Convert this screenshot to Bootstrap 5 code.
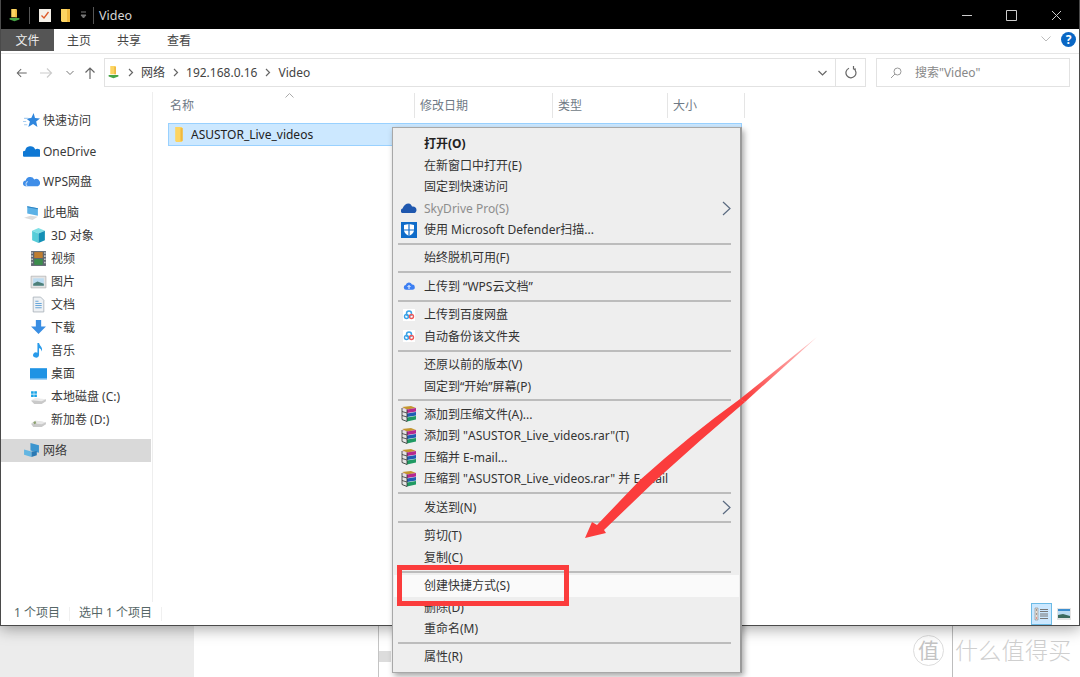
<!DOCTYPE html>
<html lang="zh-CN">
<head>
    <meta charset="UTF-8">
    <meta name="viewport" content="width=device-width, initial-scale=1.0">
    <title>Video</title>
    <link href="https://cdn.jsdelivr.net/npm/bootstrap@5.3.0/dist/css/bootstrap.min.css" rel="stylesheet">
    <style>
        html, body { margin: 0; height: 677px; overflow: hidden; background: #fff; }
        body { font: 12px/1.2 "Noto Sans", "Noto Sans CJK SC", sans-serif; color: #333; }
        .stage { width: 1080px; height: 677px; overflow: hidden; }
        .win { height: 626px; border: 1px solid #4a4a4a; border-top: 0; background: #fff; box-shadow: 0 3px 14px rgba(0,0,0,.35); z-index: 2; }

        .title-bar { height: 29px; background: #000; color: #d5d5d5; padding-left: 7px; padding-top: 1px; font-size: 12.5px; }
        .title-sep { width: 1px; height: 17px; background: #555; }
        .title-name { margin-left: 5px; }
        .win-btn { width: 45px; }
        .tab-bar { height: 25px; border-bottom: 1px solid #e6e6e6; }
        .tab-item { width: 50px; height: 22px; line-height: 24px; text-align: center; color: #444; margin-bottom: 3px; }
        .tab-file { width: 53px; background: #555; color: #eee; }
        .help-dot { width: 15px; height: 15px; background: #0a67c4; color: #fff; font-weight: 700; line-height: 15px; font-size: 12px; text-align: center; margin: 0 3px 3px 10px; }

        .addr-row { height: 38px; padding-top: 4px; align-items: flex-start; }
        .nav-btns { width: 103px; height: 29px; }
        .addr-box { width: 762px; height: 29px; border: 1px solid #e2e2e2; color: #444; line-height: 29px; }
        .addr-path { gap: 7.5px; padding-left: 2px; }
        .addr-icon { width: 13px; height: 17px; flex: none; }
        .addr-end { width: 30px; height: 27px; border-left: 1px solid #e2e2e2; }
        .search-box { width: 194px; height: 29px; margin-left: 10px; border: 1px solid #e2e2e2; color: #888; padding-left: 13px; gap: 13px; line-height: 29px; }

        .side-pane { width: 152px; border-right: 1px solid #eee; padding-top: 17px; color: #3a3a3a; }
        .side-row { height: 23px; display: flex; align-items: center; padding-left: 22px; gap: 3px; line-height: 25px; }
        .side-row.sub { padding-left: 29px; gap: 4px; }
        .side-row.active { background: #d9d9d9; margin-right: 1px; }
        .side-gap { margin-top: 8px; }
        .side-gap2 { margin-top: 7px; }
        .ic16 { width: 17px; height: 17px; flex: none; }

        .col-head { height: 26px; color: #6f7a86; }
        .col-cell { height: 25px; border-right: 1px solid #e5e5e5; padding-left: 5px; line-height: 25px; margin-top: 1px; }
        .sort-mark { top: 1px; left: 132px; }
        .file-row { height: 23px; width: 574px; margin: 5px 0 0 15px; background: #cce8ff; border: 1px solid #99d1ff; gap: 2px; padding-left: 3px; color: #222; line-height: 24px; }

        .status-bar { height: 23px; color: #566; padding-left: 13px; }
        .stat-sep { width: 1px; height: 14px; background: #f0f0f0; margin: 0 9px; }
        .view-on { width: 21px; height: 22px; background: #cce8ff; border: 1px solid #6cbbe6; }
        .view-off { width: 18px; height: 22px; margin: 0 6px 0 3px; }

        .under-strip { height: 51px; }
        .under-left { width: 194px; background: #ececec; }
        .under-mid { width: 185px; border-right: 1px solid #c4c4c4; }
        .under-bar { width: 12px; height: 11px; margin-top: 25px; background: #dcdcdc; }
        .mark-wrap { width: 167px; margin-left: auto; margin-right: 0; padding-top: 9px; color: #d0d0d0; }
        .mark-disc { width: 31px; height: 31px; border: 1px solid #ddd; font-size: 21px; line-height: 28px; text-align: center; color: #c4c4c4; }
        .mark-line { width: 1px; height: 60px; margin: -9px 2px 0 8px; background: #bdbdbd; }
        .mark-word { font-size: 23px; line-height: 30px; font-weight: 300; white-space: nowrap; letter-spacing: .3px; color: #cfcfcf; }

        .ctx-menu { left: 392px; top: 127px; width: 350px; height: 546px; margin: 0; padding: 5px 0 0; display: block; position: absolute;
            background: #eee; border: 1px solid #a8a8a8; border-right: 2px solid #9a9a9a; border-radius: 0; box-shadow: 2px 3px 6px rgba(0,0,0,.35); font-size: 12px; z-index: 5; }
        .ctx-menu .dropdown-item { height: 21.5px; line-height: 21.5px; padding: 0 0 0 31px; color: #333; position: relative; font-size: 12px; white-space: nowrap; }
        .ctx-menu .dropdown-divider { margin: 2.45px 9px 2.45px 5px; height: 2px; border: 0; background: #bcbcbc; opacity: 1; }
        .ctx-menu .is-muted { color: #8d8d8d; }
        .ctx-menu .is-bold { font-weight: 700; color: #222; }
        .ctx-menu .is-hot { background: #fafafa; width: 345px; margin-left: 1px; padding-left: 30px; }
        .menu-ic { position: absolute; left: 8px; top: 2.5px; width: 16px; height: 16px; }
        .menu-ic.tiny { left: 10px; top: 4.5px; width: 12px; height: 12px; }
        .menu-arrow { position: absolute; right: 9px; top: 3px; width: 9px; height: 15px; }
        .red-box { left: 397px; top: 565px; width: 172px; height: 41px; border: 5px solid #fb3c3c; z-index: 6; }
        .red-arrow { left: 0; top: 0; z-index: 7; pointer-events: none; }
    </style>
</head>
<body>

<svg width="0" height="0" class="position-absolute">
    <defs>
        <linearGradient id="tailFade" gradientUnits="userSpaceOnUse" x1="817" y1="337" x2="745" y2="400">
            <stop offset="0" stop-color="#fb3c3c" stop-opacity=".25"/>
            <stop offset="1" stop-color="#fb3c3c"/>
        </linearGradient>
        <symbol id="folder" viewBox="0 0 16 16"><path d="M3 1h6l1 1v12l-1 1H4L3 14z" fill="#fcd462"/><path d="M8 2h2v12H8z" fill="#f0b93f"/></symbol>
        <symbol id="netFolder" viewBox="0 0 16 16"><path d="M4 0h6l1 1v9H4z" fill="#fcd462"/><path d="M9 1h2v9H9z" fill="#eeb83e"/><path d="M2 11h12v2l-6 2-6-2z" fill="#46a546"/></symbol>
        <symbol id="star" viewBox="0 0 16 16"><path d="M10 1l1.300 4.600L16 6l-3.600 3 1.200 5L9.500 11.300 5 14l1.500-5L3 6l4.800-.4z" fill="#2f86dd"/><path d="M1 6h4M0 9h3M1 12h3" stroke="#a8cdf0"/></symbol>
        <symbol id="oneDrive" viewBox="0 0 16 16"><path d="M1 13a3 3 0 0 1 1-5.800A5 5 0 0 1 11.500 6 3.600 3.600 0 0 1 15.500 13z" fill="#0f78d4"/></symbol>
        <symbol id="wpsCloud" viewBox="0 0 16 16"><path d="M2 12.500a2.800 2.800 0 0 1 .6-5.500A4.300 4.300 0 0 1 10.600 6a3.300 3.300 0 0 1 3.400 6.500z" fill="#3f8ee8"/><path d="M4 12.500a2.500 2.500 0 0 1 .5-4.500" stroke="#bcd8f8" fill="none"/></symbol>
        <symbol id="myPc" viewBox="0 0 16 16"><path d="M4 2l10 2v7L4 9z" fill="#5bb1e6"/><path d="M4 2l10 2v1L4 3z" fill="#2d83c3"/><path d="M1 13l6-2 7 1-5 3z" fill="#dcdcdc"/></symbol>
        <symbol id="cube" viewBox="0 0 16 16"><path d="M8 1l6 2.500L8 6 2 3.500z" fill="#7fe0e6"/><path d="M2 3.500L8 6v9l-6-2.500z" fill="#57cdd8"/><path d="M14 3.500V12.500L8 15V6z" fill="#1390b6"/></symbol>
        <symbol id="film" viewBox="0 0 16 16"><path d="M1 1h14v14H1z" fill="#5e6670"/><path d="M4 2h8v5.500H4z" fill="#c07e30"/><path d="M4 8.500h8V14H4z" fill="#3c8d4d"/><path d="M2 2v12M14 2v12" stroke="#ddd" stroke-width="1.300" stroke-dasharray="1.500 1.500"/></symbol>
        <symbol id="photo" viewBox="0 0 16 16"><path d="M1 3h14v11H1z" fill="#e4e4e4" stroke="#aaa" stroke-width=".6"/><path d="M3 5h10v7H3z" fill="#bcdcf2"/><path d="M3 10l4-2 6 2v2H3z" fill="#4d7f78"/></symbol>
        <symbol id="docPage" viewBox="0 0 16 16"><path d="M3 1h7l3 3v11H3z" fill="#eef1f4" stroke="#aab2ba" stroke-width=".8"/><path d="M5 5h3M5 7h6M5 9h6M5 11h6" stroke="#6aa7d9"/></symbol>
        <symbol id="dlArrow" viewBox="0 0 16 16"><path d="M5.500 1h5v6H15L8 14 1 7h4.500z" fill="#3a8ee3"/></symbol>
        <symbol id="note" viewBox="0 0 16 16"><path d="M7 1h1.500c.5 3 4 4 2.500 8-.3-2-1.500-3-2.500-3.300V12.500A2.800 2.500 0 1 1 7 10z" fill="#2a9bea"/></symbol>
        <symbol id="desk" viewBox="0 0 16 16"><path d="M0 3h16v10.500H0z" fill="#1f93e4"/><path d="M0 12.500h16v1H0z" fill="#8cc8f2"/></symbol>
        <symbol id="driveC" viewBox="0 0 16 16"><path d="M1 3h2.500v2.500H1zM4 3h2.500v2.500H4zM1 6h2.500v2.500H1zM4 6h2.500v2.500H4z" fill="#19a3e6"/><path d="M1 12l4-2 10 .5v2L11 15H4z" fill="#c9c9c9"/><path d="M1 11.500L5 9.500l10 1-4 2z" fill="#ececec"/></symbol>
        <symbol id="driveD" viewBox="0 0 16 16"><path d="M1 12l4-2.500 10 1v2L11 15H3z" fill="#c9c9c9"/><path d="M1 11.500L5 9l10 1.500-4 2z" fill="#e7e7e7"/><path d="M3 10.500l2-1 1 2-2 1z" fill="#8ba06e"/></symbol>
        <symbol id="netMon" viewBox="0 0 16 16"><path d="M7 1l8 2v7l-8-2z" fill="#3b95cf"/><path d="M1 7l7 2v5l-7-2z" fill="#63b6e2"/><path d="M8 9l5-.5v4L8 14z" fill="#2a79b4"/></symbol>
        <symbol id="skyCloud" viewBox="0 0 16 16"><path d="M1 13a2.500 2.500 0 0 1 .5-4.500C3 5 5 3.500 7.500 3.500c2 0 3 1.500 3.500 3 2.500-.5 4.500 1 4.500 3.500 0 1.500-1 3-2 3z" fill="#1f57ae"/></symbol>
        <symbol id="shield" viewBox="0 0 16 16"><path d="M0 0h16v16H0z" fill="#0f6cc9"/><path d="M3 3l5-1 5 1v5c0 3-3 5-5 6-2-1-5-3-5-6z" fill="#fff"/><path d="M8 2v12M3 8h10" stroke="#0f6cc9" stroke-width="1.200"/></symbol>
        <symbol id="upCloud" viewBox="0 0 16 16"><path d="M4 13a3.300 3.300 0 0 1-.4-6.500A4.500 4.500 0 0 1 12 6a3.500 3.500 0 0 1 .5 7z" fill="#3d7ff2"/><path d="M8 12V7.500M6 9.300L8 7.300l2 2" stroke="#fff" stroke-width="1.300" fill="none"/></symbol>
        <symbol id="baidu" viewBox="0 0 16 16"><path d="M2 2h12v12H2z" fill="#fff"/><circle cx="8" cy="6.500" r="2.500" fill="none" stroke="#3aa3e8" stroke-width="1.500"/><circle cx="5.500" cy="9.500" r="2" fill="none" stroke="#3aa3e8" stroke-width="1.400"/><circle cx="10.500" cy="9.500" r="2" fill="none" stroke="#ef5a5a" stroke-width="1.400"/></symbol>
        <symbol id="rar" viewBox="0 0 16 16"><path d="M1 1l9-1 5 2-9 1.500z" fill="#c4962f"/><path d="M1 2l5 1.500L15 2v3.500L6 7 1 5.500z" fill="#b5288f"/><path d="M1 6l5 1.500L15 6v3.500L6 11 1 9.500z" fill="#1f5db3"/><path d="M1 10l5 1.500L15 10v3.500L6 15.500 1 13.500z" fill="#1f9a63"/><path d="M1 2l5 1.500v12L1 13.500z" fill="#e5e5e5"/><path d="M1 5.500L6 7M1 9.500L6 11M1 2v11.500M6 3.500v12M1 13.500l5 2" stroke="#333" stroke-width=".8" fill="none"/></symbol>
        <symbol id="chevR" viewBox="0 0 9 15"><path d="M1 1l7 6.500L1 14" fill="none" stroke="#5a6a80" stroke-width="1.200"/></symbol>
        <symbol id="crumb" viewBox="0 0 6 9"><path d="M1 1l3.500 3.500L1 8" fill="none" stroke="#666" stroke-width="1.200"/></symbol>
    </defs>
</svg>

<div class="stage position-relative">
    <div class="win d-flex flex-column position-relative">
        <!-- title bar -->
        <div class="title-bar d-flex align-items-center flex-shrink-0">
            <svg class="ic16 me-1" style="width:13px"><use href="#netFolder"/></svg>
            <span class="title-sep ms-1"></span>
            <svg class="ms-2 me-2" width="14" height="15" viewBox="0 0 14 15"><path d="M1 1h12v13H1z" fill="#f4f0e8"/><path d="M3.500 7.500l2.500 2.500 4.500-6" fill="none" stroke="#dd5a28" stroke-width="1.300"/></svg>
            <svg width="12" height="15" viewBox="0 0 12 15"><path d="M1 1h8l1 1v12H2l-1-1z" fill="#fcd462"/><path d="M7 1h3v13H7z" fill="#f0b93f"/></svg>
            <svg class="ms-2" width="7" height="8" viewBox="0 0 7 8"><path d="M1 1h5M1 4l2.500 3L6 4z" stroke="#777" fill="#777"/></svg>
            <span class="title-sep" style="margin-left:6px"></span>
            <span class="title-name">Video</span>
            <div class="ms-auto d-flex">
                <div class="win-btn d-flex justify-content-center"><svg width="11" height="11" viewBox="0 0 11 11"><path d="M1 5.500h10" stroke="#ccc"/></svg></div>
                <div class="win-btn d-flex justify-content-center"><svg width="11" height="11" viewBox="0 0 11 11"><path d="M.5.500h10v10H.5z" fill="none" stroke="#ccc"/></svg></div>
                <div class="win-btn d-flex justify-content-center"><svg width="11" height="11" viewBox="0 0 11 11"><path d="M1 1l9 9M10 1l-9 9" stroke="#ccc"/></svg></div>
            </div>
        </div>

        <!-- ribbon tabs -->
        <div class="tab-bar d-flex align-items-center flex-shrink-0">
            <div class="tab-item tab-file">文件</div>
            <div class="tab-item">主页</div>
            <div class="tab-item">共享</div>
            <div class="tab-item">查看</div>
            <svg class="ms-auto mb-1" width="10" height="6" viewBox="0 0 10 6"><path d="M.5.500L5 5 9.500.500" fill="none" stroke="#bbb"/></svg>
            <div class="help-dot rounded-circle">?</div>
        </div>

        <!-- address row -->
        <div class="addr-row d-flex flex-shrink-0">
            <div class="nav-btns d-flex align-items-center">
                <svg class="ms-2 ps-1" width="28" height="12" viewBox="-4 0 28 12" style="margin-left:8px"><path d="M12 6H1M5.500 1.500L1 6l4.500 4.500" fill="none" stroke="#666" stroke-width="1.200"/></svg>
                <svg width="14" height="12" viewBox="0 0 14 12" style="margin-left:2px"><path d="M1 6h11M8 1.500L12.500 6 8 10.500" fill="none" stroke="#ccc" stroke-width="1.200"/></svg>
                <svg width="8" height="6" viewBox="0 0 8 6" style="margin-left:13px"><path d="M.5 1L4 4.500 7.500 1" fill="none" stroke="#777"/></svg>
                <svg width="12" height="14" viewBox="0 0 12 14" style="margin-left:10px"><path d="M6 13V2M1.500 6.500L6 2l4.500 4.500" fill="none" stroke="#666" stroke-width="1.200"/></svg>
            </div>
            <div class="addr-box d-flex align-items-center flex-shrink-0">
                <div class="addr-path d-flex align-items-center flex-grow-1">
                    <svg class="addr-icon"><use href="#netFolder"/></svg>
                    <svg width="6" height="9"><use href="#crumb"/></svg>
                    <span>网络</span>
                    <svg width="6" height="9"><use href="#crumb"/></svg>
                    <span>192.168.0.16</span>
                    <svg width="6" height="9"><use href="#crumb"/></svg>
                    <span>Video</span>
                </div>
                <svg class="me-2" width="9" height="6" viewBox="0 0 9 6"><path d="M.5 1L4.500 5 8.500 1" fill="none" stroke="#666" stroke-width="1.200"/></svg>
                <div class="addr-end d-flex align-items-center justify-content-center">
                    <svg width="12" height="13" viewBox="0 0 12 13"><path d="M4 2.200A5 5 0 1 0 8.500 2.500M8.500 0v3H11" fill="none" stroke="#666" stroke-width="1.200"/></svg>
                </div>
            </div>
            <div class="search-box d-flex align-items-center flex-shrink-0">
                <svg width="12" height="12" viewBox="0 0 12 12"><circle cx="7.500" cy="4.500" r="3.500" fill="none" stroke="#999"/><path d="M5 7l-4 4" stroke="#999"/></svg>
                <span>搜索"Video"</span>
            </div>
        </div>

        <!-- main area -->
        <div class="d-flex flex-grow-1 overflow-hidden">
            <nav class="side-pane flex-shrink-0">
                <div class="side-row"><svg class="ic16"><use href="#star"/></svg>快速访问</div>
                <div class="side-row side-gap"><svg class="ic16"><use href="#oneDrive"/></svg>OneDrive</div>
                <div class="side-row side-gap2"><svg class="ic16"><use href="#wpsCloud"/></svg>WPS网盘</div>
                <div class="side-row side-gap"><svg class="ic16"><use href="#myPc"/></svg>此电脑</div>
                <div class="side-row sub"><svg class="ic16"><use href="#cube"/></svg>3D 对象</div>
                <div class="side-row sub"><svg class="ic16"><use href="#film"/></svg>视频</div>
                <div class="side-row sub"><svg class="ic16"><use href="#photo"/></svg>图片</div>
                <div class="side-row sub"><svg class="ic16"><use href="#docPage"/></svg>文档</div>
                <div class="side-row sub"><svg class="ic16"><use href="#dlArrow"/></svg>下载</div>
                <div class="side-row sub"><svg class="ic16"><use href="#note"/></svg>音乐</div>
                <div class="side-row sub"><svg class="ic16"><use href="#desk"/></svg>桌面</div>
                <div class="side-row sub"><svg class="ic16"><use href="#driveC"/></svg>本地磁盘 (C:)</div>
                <div class="side-row sub"><svg class="ic16"><use href="#driveD"/></svg>新加卷 (D:)</div>
                <div class="side-row active side-gap"><svg class="ic16"><use href="#netMon"/></svg>网络</div>
            </nav>
            <div class="flex-grow-1">
                <div class="col-head d-flex position-relative">
                    <svg class="sort-mark position-absolute" width="9" height="5" viewBox="0 0 9 5"><path d="M.5 4.500L4.500.5l4 4" fill="none" stroke="#aaa"/></svg>
                    <div class="col-cell" style="width:262px;padding-left:17px">名称</div>
                    <div class="col-cell" style="width:138px">修改日期</div>
                    <div class="col-cell" style="width:115px">类型</div>
                    <div class="col-cell" style="width:77px">大小</div>
                </div>
                <div class="file-row d-flex align-items-center">
                    <svg class="ic16"><use href="#folder"/></svg>
                    <span>ASUSTOR_Live_videos</span>
                </div>
            </div>
        </div>

        <!-- status bar -->
        <div class="status-bar d-flex align-items-center flex-shrink-0">
            <span>1 个项目</span><span class="stat-sep"></span>
            <span>选中 1 个项目</span><span class="stat-sep"></span>
            <div class="view-on ms-auto d-flex align-items-center justify-content-center">
                <svg width="15" height="14" viewBox="0 0 15 14"><path d="M1 1h3v12H1z" fill="#e8e0d8" stroke="#888" stroke-width=".6"/><path d="M2 3h1M2 7h1" stroke="#555"/><path d="M2 11h1" stroke="#d44"/><path d="M6 2.500h8M6 4.500h8M6 7h8M6 9h8M6 11.500h8" stroke="#777"/></svg>
            </div>
            <div class="view-off d-flex align-items-center justify-content-center">
                <svg width="14" height="12" viewBox="0 0 14 12"><path d="M0 0h14v12H0z" fill="#e4e4e4"/><path d="M1 1h12v9H1z" fill="#bcdcf2"/><path d="M1 3h12V1H1z" fill="#3d8fd0"/><path d="M1 7l5-1 7 2v2H1z" fill="#3c6b5e"/></svg>
            </div>
        </div>
    </div>

    <!-- what shows below the window -->
    <div class="under-strip d-flex">
        <div class="under-left"></div>
        <div class="under-mid"></div>
        <div class="under-bar"></div>
        <div class="mark-wrap d-flex align-items-start">
            <div class="mark-disc rounded-circle flex-shrink-0">值</div>
            <div class="mark-line flex-shrink-0"></div>
            <div class="mark-word">什么值得买</div>
        </div>
    </div>

    <!-- context menu -->
    <div class="ctx-menu dropdown-menu">
        <a class="dropdown-item is-bold">打开(O)</a>
        <a class="dropdown-item">在新窗口中打开(E)</a>
        <a class="dropdown-item">固定到快速访问</a>
        <a class="dropdown-item is-muted"><svg class="menu-ic"><use href="#skyCloud"/></svg>SkyDrive Pro(S)<svg class="menu-arrow"><use href="#chevR"/></svg></a>
        <a class="dropdown-item"><svg class="menu-ic"><use href="#shield"/></svg>使用 Microsoft Defender扫描...</a>
        <hr class="dropdown-divider">
        <a class="dropdown-item">始终脱机可用(F)</a>
        <hr class="dropdown-divider">
        <a class="dropdown-item"><svg class="menu-ic tiny"><use href="#upCloud"/></svg>上传到 “WPS云文档”</a>
        <hr class="dropdown-divider">
        <a class="dropdown-item"><svg class="menu-ic"><use href="#baidu"/></svg>上传到百度网盘</a>
        <a class="dropdown-item"><svg class="menu-ic"><use href="#baidu"/></svg>自动备份该文件夹</a>
        <hr class="dropdown-divider">
        <a class="dropdown-item">还原以前的版本(V)</a>
        <a class="dropdown-item">固定到“开始”屏幕(P)</a>
        <hr class="dropdown-divider">
        <a class="dropdown-item"><svg class="menu-ic"><use href="#rar"/></svg>添加到压缩文件(A)...</a>
        <a class="dropdown-item"><svg class="menu-ic"><use href="#rar"/></svg>添加到 "ASUSTOR_Live_videos.rar"(T)</a>
        <a class="dropdown-item"><svg class="menu-ic"><use href="#rar"/></svg>压缩并 E-mail...</a>
        <a class="dropdown-item"><svg class="menu-ic"><use href="#rar"/></svg>压缩到 "ASUSTOR_Live_videos.rar" 并 E-mail</a>
        <hr class="dropdown-divider">
        <a class="dropdown-item">发送到(N)<svg class="menu-arrow"><use href="#chevR"/></svg></a>
        <hr class="dropdown-divider">
        <a class="dropdown-item">剪切(T)</a>
        <a class="dropdown-item">复制(C)</a>
        <hr class="dropdown-divider">
        <a class="dropdown-item is-hot">创建快捷方式(S)</a>
        <a class="dropdown-item">删除(D)</a>
        <a class="dropdown-item">重命名(M)</a>
        <hr class="dropdown-divider">
        <a class="dropdown-item">属性(R)</a>
    </div>

    <!-- annotations -->
    <div class="red-box position-absolute"></div>
    <svg class="red-arrow position-absolute" width="1080" height="677" viewBox="0 0 1080 677">
        <path d="M817 337L745 402 740 399Z" fill="url(#tailFade)"/>
        <path d="M745 402Q700 440 655 481L604 530 606 533 585 538 592 522 597 525 640 480Q690 435 740 399Z" fill="#fb3c3c"/>
    </svg>
</div>

<script src="https://cdn.jsdelivr.net/npm/bootstrap@5.3.0/dist/js/bootstrap.bundle.min.js"></script>
</body>
</html>
